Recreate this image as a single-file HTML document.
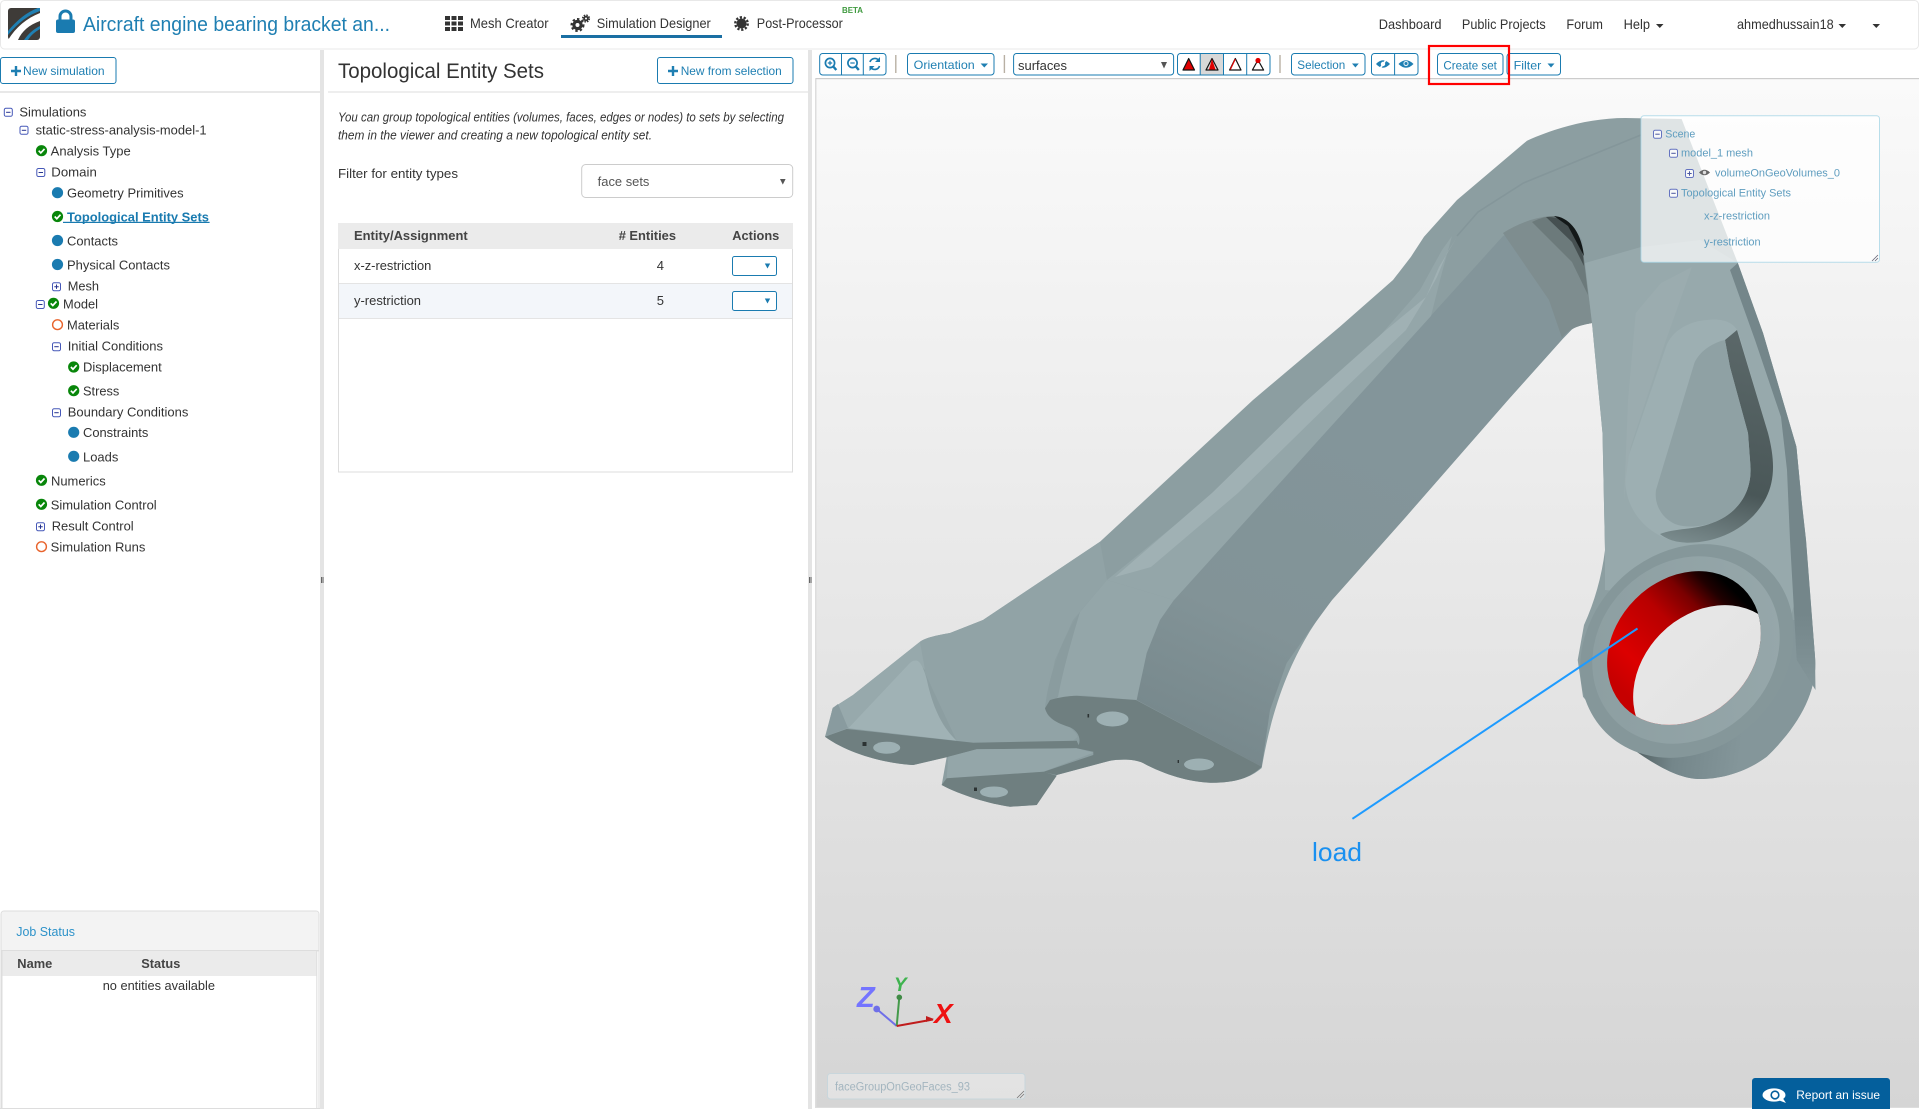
<!DOCTYPE html>
<html lang="en">
<head>
<meta charset="utf-8">
<title>Topological Entity Sets</title>
<style>
html,body{margin:0;padding:0;width:1919px;height:1109px;overflow:hidden;background:#fff}
svg{display:block;position:absolute;left:0;top:0}
text{font-family:"Liberation Sans",sans-serif;white-space:pre}
.tree{font-size:13px;fill:#333}
.nav{font-size:14px;fill:#333}
.blue{fill:#1f7fb2}
.btn{font-size:12px;fill:#1f7fb2}
.scene{font-size:11px;fill:#5f9dbf}
.th{font-size:13px;font-weight:bold;fill:#444}
.td{font-size:13px;fill:#333}
</style>
</head>
<body>
<svg width="1919" height="1109" viewBox="0 0 1919 1109" xmlns="http://www.w3.org/2000/svg">
<defs>
<linearGradient id="bg" gradientUnits="userSpaceOnUse" x1="0" y1="79" x2="0" y2="1107"><stop offset="0" stop-color="#fafafa"/><stop offset="1" stop-color="#d5d5d5"/></linearGradient>
<linearGradient id="face" gradientUnits="userSpaceOnUse" x1="1400" y1="450" x2="1250" y2="780"><stop offset="0" stop-color="#83959a"/><stop offset=".6" stop-color="#829397"/><stop offset="1" stop-color="#76878b"/></linearGradient>
<linearGradient id="redg" gradientUnits="userSpaceOnUse" x1="1610" y1="640" x2="1760" y2="640"><stop offset="0" stop-color="#c60000"/><stop offset=".2" stop-color="#dc0000"/><stop offset=".55" stop-color="#b80000"/><stop offset=".75" stop-color="#7a0000"/><stop offset=".9" stop-color="#200000"/><stop offset="1" stop-color="#000"/></linearGradient>
<linearGradient id="cyl" gradientUnits="userSpaceOnUse" x1="1620" y1="745" x2="1740" y2="760"><stop offset="0" stop-color="#445051"/><stop offset=".45" stop-color="#74868a"/><stop offset="1" stop-color="#84969a"/></linearGradient>
<linearGradient id="ringg" gradientUnits="userSpaceOnUse" x1="1600" y1="570" x2="1780" y2="730"><stop offset="0" stop-color="#8c9ea1"/><stop offset="1" stop-color="#97a8ab"/></linearGradient>
<linearGradient id="wall" gradientUnits="userSpaceOnUse" x1="1740" y1="340" x2="1690" y2="545"><stop offset="0" stop-color="#5a6768"/><stop offset=".7" stop-color="#4a5758"/><stop offset="1" stop-color="#7a8b8d"/></linearGradient>
<linearGradient id="strip" gradientUnits="userSpaceOnUse" x1="0" y1="500" x2="0" y2="690"><stop offset="0" stop-color="#74868a"/><stop offset=".6" stop-color="#74868a"/><stop offset="1" stop-color="#84969a"/></linearGradient>
<clipPath id="holeclip"><ellipse cx="1684" cy="648" rx="84" ry="69" transform="rotate(-45 1684 648)"/></clipPath>
<g id="chk"><circle r="5.6" fill="#08860a"/><path d="M-2.8 0 L-.7 2.2 L3 -1.8" fill="none" stroke="#fff" stroke-width="1.7"/></g>
<circle id="dot" r="5.6" fill="#1a7bb0"/>
<circle id="ring" r="4.9" fill="#fff" stroke="#e8632c" stroke-width="1.4"/>
<g id="min"><rect x="-4" y="-4" width="8" height="8" rx="1.6" fill="#fff" stroke="#4658b8" stroke-width="1"/><path d="M-2.2 0H2.2" stroke="#27348f" stroke-width="1"/></g>
<g id="pls"><rect x="-4" y="-4" width="8" height="8" rx="1.6" fill="#fff" stroke="#4658b8" stroke-width="1"/><path d="M-2.2 0H2.2M0 -2.2V2.2" stroke="#27348f" stroke-width="1"/></g>
</defs>

<!-- header -->
<rect x=".5" y=".5" width="1918" height="48.5" rx="4" fill="#fff" stroke="#e8e8e8"/>
<rect x="8" y="8" width="32" height="32" rx="3" fill="#3e3b38"/>
<path d="M8 40C16 27 27 18 40 13V21C29 25 22 31 18 40Z" fill="#fff"/>
<path d="M8 31C17 20 27 12 38 8H40V11C28 15 18 23 8 35Z" fill="#1f7fb2"/>
<path d="M24 40C29 33 34 29 40 26V29C35 32 31 35 28 40Z" fill="#1f7fb2"/>
<rect x="56" y="19.5" width="19" height="13.5" rx="2" fill="#1a7bb0"/>
<path d="M60 20V16.5A5.5 5.5 0 0 1 71 16.5V20" fill="none" stroke="#1a7bb0" stroke-width="3"/>
<text x="83" y="31" font-size="20" class="blue" textLength="307" lengthAdjust="spacingAndGlyphs">Aircraft engine bearing bracket an...</text>

<g fill="#333">
<rect x="445" y="16" width="5" height="4"/><rect x="451.5" y="16" width="5" height="4"/><rect x="458" y="16" width="5" height="4"/>
<rect x="445" y="21.5" width="5" height="4"/><rect x="451.5" y="21.5" width="5" height="4"/><rect x="458" y="21.5" width="5" height="4"/>
<rect x="445" y="27" width="5" height="4"/><rect x="451.5" y="27" width="5" height="4"/><rect x="458" y="27" width="5" height="4"/>
</g>
<g fill="none" stroke="#333">
<circle cx="577.5" cy="25" r="3.6" stroke-width="3.2"/><circle cx="577.5" cy="25" r="6" stroke-width="2" stroke-dasharray="2.4 2.2"/>
<circle cx="586" cy="18.5" r="1.9" stroke-width="1.8"/><circle cx="586" cy="18.5" r="3.4" stroke-width="1.4" stroke-dasharray="1.6 1.1"/>
<circle cx="741.5" cy="23.5" r="5" fill="#333" stroke="none"/><circle cx="741.5" cy="23.5" r="6.2" stroke-width="2.4" stroke-dasharray="2.2 1.7"/>
</g>
<text x="470" y="28" font-size="14" class="nav" textLength="78.6" lengthAdjust="spacingAndGlyphs">Mesh Creator</text>
<text x="596.8" y="28" font-size="14" class="nav" textLength="114" lengthAdjust="spacingAndGlyphs">Simulation Designer</text>
<text x="756.8" y="28" font-size="14" class="nav" textLength="86" lengthAdjust="spacingAndGlyphs">Post-Processor</text>
<text x="842" y="13" font-size="8.5" font-weight="bold" fill="#3f9a3f" textLength="21" lengthAdjust="spacingAndGlyphs">BETA</text>
<rect x="561" y="35" width="161" height="3" fill="#1a6fa3"/>
<text x="1378.8" y="29" class="nav" textLength="62.7" lengthAdjust="spacingAndGlyphs">Dashboard</text>
<text x="1461.9" y="29" class="nav" textLength="83.8" lengthAdjust="spacingAndGlyphs">Public Projects</text>
<text x="1566.4" y="29" class="nav" textLength="36.6" lengthAdjust="spacingAndGlyphs">Forum</text>
<text x="1623.6" y="29" class="nav" textLength="26.4" lengthAdjust="spacingAndGlyphs">Help</text>
<text x="1737" y="29" class="nav" textLength="96.7" lengthAdjust="spacingAndGlyphs">ahmedhussain18</text>
<path d="M1656 24h7.5l-3.7 4zM1838.5 24h7.5l-3.7 4zM1872.5 24h7.5l-3.7 4z" fill="#333"/>

<!-- splitters -->
<rect x="320" y="50" width="4" height="1059" fill="#e4e4e4"/>
<rect x="808" y="50" width="4" height="1059" fill="#e4e4e4"/>
<path d="M321.5 577v6M323 577v6M809.5 577v6M811 577v6" stroke="#666" stroke-width="1"/>

<!-- left panel -->
<rect x=".5" y="57.5" width="115.5" height="26" rx="2.5" fill="#fff" stroke="#1a7bb0"/>
<path d="M11 71H21M16 66V76" stroke="#1f7fb2" stroke-width="2.4"/>
<text x="23" y="75" class="btn" textLength="81.6" lengthAdjust="spacingAndGlyphs">New simulation</text>
<rect x="0" y="91" width="320" height="2" fill="#e8e8e8"/>

<use href="#min" x="8.3" y="112.3"/><text x="19.4" y="116.3" class="tree" textLength="67" lengthAdjust="spacingAndGlyphs">Simulations</text>
<use href="#min" x="24" y="130.3"/><text x="35.6" y="134.3" class="tree" textLength="171" lengthAdjust="spacingAndGlyphs">static-stress-analysis-model-1</text>
<use href="#chk" x="41.5" y="150.7"/><text x="50.7" y="155.3" class="tree" textLength="80" lengthAdjust="spacingAndGlyphs">Analysis Type</text>
<use href="#min" x="40.8" y="172.5"/><text x="51.3" y="176.3" class="tree" textLength="45.5" lengthAdjust="spacingAndGlyphs">Domain</text>
<use href="#dot" x="57.5" y="192.7"/><text x="67" y="197.3" class="tree" textLength="116.6" lengthAdjust="spacingAndGlyphs">Geometry Primitives</text>
<use href="#chk" x="57.5" y="216.5"/><text x="67" y="221.3" font-size="13" font-weight="bold" fill="#1a7bb0" textLength="142" lengthAdjust="spacingAndGlyphs">Topological Entity Sets</text>
<rect x="63" y="221.8" width="146.6" height="1.2" fill="#1a7bb0"/>
<use href="#dot" x="57.5" y="240.5"/><text x="67" y="245.3" class="tree" textLength="51" lengthAdjust="spacingAndGlyphs">Contacts</text>
<use href="#dot" x="57.5" y="264.5"/><text x="67" y="269.3" class="tree" textLength="103" lengthAdjust="spacingAndGlyphs">Physical Contacts</text>
<use href="#pls" x="56.5" y="286.7"/><text x="67.7" y="290.3" class="tree" textLength="31.3" lengthAdjust="spacingAndGlyphs">Mesh</text>
<use href="#min" x="40.3" y="304.5"/><use href="#chk" x="53.5" y="303.3"/><text x="63" y="308.3" class="tree" textLength="35" lengthAdjust="spacingAndGlyphs">Model</text>
<use href="#ring" x="57.5" y="324.7"/><text x="67" y="329.3" class="tree" textLength="52.3" lengthAdjust="spacingAndGlyphs">Materials</text>
<use href="#min" x="56.5" y="346.7"/><text x="67.7" y="350.3" class="tree" textLength="95.3" lengthAdjust="spacingAndGlyphs">Initial Conditions</text>
<use href="#chk" x="73.7" y="367"/><text x="83" y="371.3" class="tree" textLength="78.7" lengthAdjust="spacingAndGlyphs">Displacement</text>
<use href="#chk" x="73.7" y="390.7"/><text x="83" y="395.3" class="tree" textLength="36.3" lengthAdjust="spacingAndGlyphs">Stress</text>
<use href="#min" x="56.5" y="412.7"/><text x="67.7" y="416.3" class="tree" textLength="120.7" lengthAdjust="spacingAndGlyphs">Boundary Conditions</text>
<use href="#dot" x="73.7" y="432.3"/><text x="83" y="437" class="tree" textLength="65.3" lengthAdjust="spacingAndGlyphs">Constraints</text>
<use href="#dot" x="73.7" y="456.3"/><text x="83" y="461.3" class="tree" textLength="35.3" lengthAdjust="spacingAndGlyphs">Loads</text>
<use href="#chk" x="41.5" y="480.3"/><text x="51" y="485.3" class="tree" textLength="54.7" lengthAdjust="spacingAndGlyphs">Numerics</text>
<use href="#chk" x="41.5" y="504.3"/><text x="50.7" y="509.3" class="tree" textLength="106" lengthAdjust="spacingAndGlyphs">Simulation Control</text>
<use href="#pls" x="40.5" y="526.7"/><text x="51.7" y="530.3" class="tree" textLength="82" lengthAdjust="spacingAndGlyphs">Result Control</text>
<use href="#ring" x="41.5" y="546.7"/><text x="50.7" y="551.3" class="tree" textLength="94.7" lengthAdjust="spacingAndGlyphs">Simulation Runs</text>

<!-- job status -->
<path d="M1 1109V914a3 3 0 0 1 3-3H316a3 3 0 0 1 3 3V1109Z" fill="#fff" stroke="#ddd"/>
<path d="M1.5 951V914a2.5 2.5 0 0 1 2.5-2.5H316a2.5 2.5 0 0 1 2.5 2.5V951Z" fill="#f3f3f3"/>
<rect x="1" y="950" width="318" height="1.4" fill="#ddd"/>
<text x="16.3" y="936" font-size="13" fill="#2d92c9" textLength="58.7" lengthAdjust="spacingAndGlyphs">Job Status</text>
<rect x="2" y="951" width="315" height="25" fill="#ebebeb"/>
<path d="M2 951V1109M316.8 951V1109" stroke="#ddd"/>
<rect x="0" y="1108" width="320" height="1" fill="#ddd"/>
<text x="17.3" y="968" class="th" textLength="35" lengthAdjust="spacingAndGlyphs">Name</text>
<text x="141.3" y="968" class="th" textLength="39" lengthAdjust="spacingAndGlyphs">Status</text>
<text x="102.7" y="990" font-size="13" fill="#333" textLength="112.3" lengthAdjust="spacingAndGlyphs">no entities available</text>

<!-- middle panel -->
<rect x="328" y="91" width="480" height="2" fill="#eee"/>
<text x="338" y="78" font-size="21" fill="#333" textLength="206" lengthAdjust="spacingAndGlyphs">Topological Entity Sets</text>
<rect x="657.5" y="57.5" width="135.5" height="26" rx="2.5" fill="#fff" stroke="#1a7bb0"/>
<path d="M668 71H678M673 66V76" stroke="#1f7fb2" stroke-width="2.4"/>
<text x="680.7" y="75" class="btn" textLength="101" lengthAdjust="spacingAndGlyphs">New from selection</text>
<text x="338" y="121.5" font-size="12.5" font-style="italic" fill="#333" textLength="446" lengthAdjust="spacingAndGlyphs">You can group topological entities (volumes, faces, edges or nodes) to sets by selecting</text>
<text x="338" y="139.5" font-size="12.5" font-style="italic" fill="#333" textLength="314" lengthAdjust="spacingAndGlyphs">them in the viewer and creating a new topological entity set.</text>
<text x="338" y="178" font-size="13" fill="#333" textLength="120" lengthAdjust="spacingAndGlyphs">Filter for entity types</text>
<rect x="581.7" y="164.5" width="211" height="33" rx="4" fill="#fff" stroke="#ccc"/>
<text x="597.7" y="186" font-size="12.5" fill="#555" textLength="51.7" lengthAdjust="spacingAndGlyphs">face sets</text>
<path d="M780 179h5.6l-2.8 5.6z" fill="#555"/>

<rect x="338.5" y="223.5" width="454" height="248.5" fill="#fff" stroke="#ddd"/>
<rect x="338" y="223" width="455" height="26" fill="#ebebeb"/>
<text x="354" y="240" class="th" textLength="113.7" lengthAdjust="spacingAndGlyphs">Entity/Assignment</text>
<text x="618.7" y="240" class="th" textLength="57.3" lengthAdjust="spacingAndGlyphs"># Entities</text>
<text x="732.3" y="240" class="th" textLength="47" lengthAdjust="spacingAndGlyphs">Actions</text>
<rect x="339" y="283" width="453" height="35" fill="#f3f6fa"/>
<path d="M339 283.5H792M339 318.5H792" stroke="#e4e4e4"/>
<text x="354" y="270" class="td" textLength="77.3" lengthAdjust="spacingAndGlyphs">x-z-restriction</text>
<text x="656.7" y="270" class="td">4</text>
<text x="354" y="305" class="td" textLength="67" lengthAdjust="spacingAndGlyphs">y-restriction</text>
<text x="656.7" y="305" class="td">5</text>
<rect x="732.5" y="256.5" width="44" height="19" rx="2" fill="#fff" stroke="#1a7bb0"/>
<rect x="732.5" y="291.5" width="44" height="19" rx="2" fill="#fff" stroke="#1a7bb0"/>
<path d="M764.8 263.5h5.4l-2.7 5zM764.8 298.5h5.4l-2.7 5z" fill="#1a7bb0"/>

<!-- viewer -->
<rect x="815" y="78" width="1104" height="1030" fill="#ddd"/>
<rect x="816.5" y="79" width="1102.5" height="1028" fill="url(#bg)"/>
<rect x="816" y="78" width="1103" height="1.2" fill="#ccc"/>

<!-- model: silhouette -->
<path fill="#8c9ea1" d="M1527,140.7 C1555,128 1590,118 1625.5,118 L1681.6,119 L1737.8,263 L1763,333 L1796.4,446.7 L1801.5,500 L1806,540 L1815,656.7 C1818,690 1800,725 1766.7,756.7 C1745,773 1720,779 1700,779 C1680,779 1655,767 1616.7,736.7 L1583,696.7 L1577.7,660 L1584,625 Q1600,590 1605,550 L1602.5,433 L1592,323 C1575,326 1568,330 1561.7,340 L1508,400 L1406,516.7 L1332,600 C1300,640 1275,690 1261.7,768 C1250,778 1235,783 1210,782.7 C1190,782 1165,775 1143,763 C1135,759 1120,759 1110,760.7 L1056.7,775 L1036.7,805 L1010,806.7 C990,804 960,795 941.7,785 L946.7,757 L913.3,765 C890,764 850,755 825,736.7 L832.7,708 L853,695 L920,641.7 Q926,637 950,633 L983,620 L1100,541.7 L1253,400 L1339.8,326.7 L1393,280 L1411,256.7 L1424,236.7 L1457,200Z"/>
<!-- left lower arm -->
<path fill="#91a3a6" d="M983,620 L1100,541.7 L1107,580 L1073,620 L1055,660 L1045,708 C1050,720 1072,724 1077.7,736.7 L1073,740.7 L973,742.7 L956.7,740.7 L925,673 L920,641.7 Q926,637 950,633Z"/>
<polygon fill="#97a9ac" points="832.7,708 853,695 920,641.7 925,670 915,660 848.3,728.3 826,736"/>
<polygon fill="#899b9f" points="832.7,708 838,704 848,728 826,736"/>
<path fill="#a0b2b5" d="M848.3,728.3 L908,665 Q915,657 920,663 Q925,670 928,685 C934,710 943,728 956.7,740.7Z"/>
<!-- arch -->
<path fill="#94a6a9" d="M1045,708 C1048,680 1060,640 1080,612 L1107,580 L1174,600 L1160,620 C1150,645 1142,670 1136.7,700 C1110,698 1090,695 1076.7,695.7 C1065,696 1052,698 1045,708Z"/>
<path fill="#8a9c9f" d="M1045,708 C1048,680 1060,640 1080,612 C1070,645 1062,675 1058,697Z"/>
<!-- dark face -->
<polygon fill="url(#face)" points="1503,236 1530,220 1554,216 1569,222 1582,240 1585,267 1592,323 1574.5,326.7 1561.7,340 1508,400 1406,516.7 1332,600 1310,630 1286.7,663 1270,710 1261.7,766.7 1136.7,700 1146.7,653 1160,620 1174,600"/>
<!-- bands -->
<polygon fill="#94a6a9" points="1107,580 1289,433 1385,330 1420,290 1442,250 1452,236 1440,280 1431,316 1325,433 1174,600"/>
<polygon fill="#a0b1b4" points="1115,577 1212,493 1304,403 1386,330 1426,297 1406,330 1340,393 1238,493 1151,567"/>
<polygon fill="#a0b1b4" points="1426,297 1439,267 1457,237 1447,253 1437,277"/>
<path d="M1640.8,135 L1523.5,183 L1478,212 L1457,236" fill="none" stroke="#84969a" stroke-width="1.6"/>
<!-- arm pocket -->
<path fill="#7e8d8f" d="M1503,233 C1520,222 1540,216 1554,216 C1572,218 1582,235 1584,260 L1592,323 C1575,326 1568,330 1562,338 L1549,300Z"/>
<path fill="#6c7a7b" d="M1532,222 C1540,218 1548,216 1554,216 C1572,218 1582,235 1584,260 L1588,295 L1572,262Z"/>
<path fill="#465051" d="M1546,217 C1570,216 1582,235 1584,266 L1572,242Z"/>
<path fill="#131818" d="M1554,216 C1568,217 1581,230 1584,256 L1568,226Z"/>
<!-- leg -->
<polygon fill="#97a9ac" points="1585,263 1641,247 1700,240 1737.8,263 1763,333 1796.4,446.7 1801.5,500 1806,560 1790,620 1696,600 1605,590 1605,550 1602.5,433 1592,323"/>
<polygon fill="#9bacaf" points="1635.7,313 1661,283 1692,267 1666,340 1630.6,446.7 1624,500 1628,400"/>
<!-- lower cylinder -->
<path fill="url(#cyl)" d="M1790,620 L1812,620 L1815,656.7 C1818,690 1800,725 1766.7,756.7 C1745,773 1720,779 1700,779 C1680,779 1655,767 1616.7,736.7 L1700,650Z"/>
<polygon fill="url(#strip)" points="1737.8,263 1763,333 1796.4,446.7 1801.5,500 1806,540 1815,656.7 1815.5,690 1796.7,660 1790,540 1787,470 1781,417 1755,340 1730,270"/>
<!-- teardrop -->
<path fill="#9dafb2" d="M1707,320 C1722,318 1735,322 1739,334 L1768,433 C1775,460 1775,480 1766,498 C1752,525 1722,543 1686.7,542.7 C1655,542 1625,515 1625.5,480 L1629,455 L1666,346.7 C1672,330 1690,321 1707,320Z"/>
<path fill="url(#wall)" d="M1725,340 L1737,330 L1768,433 C1775,460 1775,480 1766,498 C1752,525 1722,543 1686.7,542.7 C1675,542 1668,540 1660,534 C1675,528 1695,530 1712,523 C1735,515 1752,495 1750.5,466.7 L1748,433 L1730,367Z"/>
<path fill="#8fa1a4" d="M1725,340 L1730,367 L1748,433 L1750.5,466.7 C1752,495 1735,515 1712,523 C1700,527 1685,528 1675,524 C1662,518 1654,505 1656,490 L1694.4,363 C1700,350 1715,342 1725,340Z"/>
<!-- ring -->
<ellipse cx="1687" cy="651" rx="115" ry="98" transform="rotate(-45 1687 651)" fill="#85979a"/>
<ellipse cx="1686" cy="650" rx="100" ry="87" transform="rotate(-45 1686 650)" fill="url(#ringg)"/>
<ellipse cx="1684" cy="648" rx="84" ry="69" transform="rotate(-45 1684 648)" fill="url(#redg)"/>
<g clip-path="url(#holeclip)"><ellipse cx="1710" cy="682" rx="84" ry="69" transform="rotate(-45 1710 682)" fill="url(#bg)"/></g>
<!-- feet -->
<path fill="#6f7f80" d="M825,736.7 L846.7,729 L973.3,742.7 L1076.7,740.7 L1080,748.3 L976.7,749.3 L946.7,757.3 L913.3,765 C890,764 850,755 825,736.7Z"/>
<path fill="#6f7f80" d="M1045,708.3 L1050,700 C1060,697 1068,696 1076.7,695.7 L1136,700 L1261.7,766.7 C1250,778 1235,783 1210,782.7 C1190,782 1165,775 1143,763 C1135,759 1120,759 1110,760.7 L1056.7,775 L1043,772 L1093.3,755 L1093.3,751.7 L1076.7,748.3 C1082,742 1080,732 1070,727.3 C1060,724 1048,720 1045,708.3Z"/>
<path fill="#94a6a9" d="M948.3,756.7 L976.7,749.3 L1076.7,748.3 L1093.3,752.7 L1043.3,771.7 L946.7,778.3Z"/>
<path fill="#6f7f80" d="M941.7,785 L946.7,778.3 L1043.3,771.7 L1056.7,775.7 L1036.7,805 L1010,806.7 C990,804 960,795 941.7,785Z"/>
<g fill="#9db0b3"><ellipse cx="886.7" cy="747.7" rx="13.5" ry="6"/><ellipse cx="1112.5" cy="719" rx="16" ry="7.5"/><ellipse cx="1199" cy="764.5" rx="15" ry="6"/><ellipse cx="994" cy="792" rx="14" ry="5.5"/></g>
<g fill="#2c3333"><rect x="862.5" y="742" width="4" height="4"/><rect x="1087.5" y="714" width="1.6" height="3.5"/><rect x="1177.6" y="760" width="1.4" height="3"/><rect x="974" y="787.5" width="3" height="3.5"/></g>
<!-- annotation -->
<path d="M1352.4 818.8L1637.5 628.5" stroke="#1e9bff" stroke-width="2" fill="none"/>
<text x="1312" y="861" font-size="26" fill="#1a90f0" textLength="50" lengthAdjust="spacingAndGlyphs">load</text>

<!-- axes -->
<g fill="none" stroke-width="2">
<path d="M896.7 1026L876.7 1009" stroke="#6f6fe8"/><path d="M896.7 1026L899.3 997.3" stroke="#449a4a"/><path d="M896.7 1026L933 1019.5" stroke="#c01c1c"/>
</g>
<circle cx="876.7" cy="1009" r="3.4" fill="#6f6fe8"/><circle cx="899.3" cy="997.3" r="2.8" fill="#3f8a45"/><path d="M934 1019L926 1016V1022Z" fill="#c01c1c"/>
<text x="857" y="1007" font-size="29" font-weight="bold" font-style="italic" fill="#7474ff">Z</text>
<text x="894" y="991" font-size="19" font-weight="bold" font-style="italic" fill="#3fb34f">Y</text>
<text x="934" y="1023" font-size="28" font-weight="bold" font-style="italic" fill="#ee1111">X</text>

<!-- scene panel -->
<rect x="1641" y="115.7" width="238.5" height="146.6" rx="3" fill="#fff" fill-opacity=".72" stroke="#a8d6e6" stroke-opacity=".8"/>
<path d="M1872 261L1878 255M1875 261L1878 258" stroke="#667" stroke-width=".8"/>
<g opacity=".8">
<use href="#min" x="1657.5" y="134.2"/><use href="#min" x="1673.5" y="153.3"/><use href="#pls" x="1689.5" y="173.5"/><use href="#min" x="1673.5" y="193.3"/>
</g>
<path d="M1699 172.5Q1704.5 167 1710 172.5Q1704.5 178 1699 172.5Z" fill="#666"/><circle cx="1704.5" cy="172.5" r="1.7" fill="#ddd"/>
<text x="1665.3" y="137.5" class="scene" fill="#5d8aa3" textLength="30" lengthAdjust="spacingAndGlyphs">Scene</text>
<text x="1681" y="156.5" class="scene" textLength="72" lengthAdjust="spacingAndGlyphs">model_1 mesh</text>
<text x="1715" y="176.5" class="scene" textLength="125" lengthAdjust="spacingAndGlyphs">volumeOnGeoVolumes_0</text>
<text x="1681" y="196.5" class="scene" textLength="110" lengthAdjust="spacingAndGlyphs">Topological Entity Sets</text>
<text x="1704" y="219.5" class="scene" textLength="66" lengthAdjust="spacingAndGlyphs">x-z-restriction</text>
<text x="1704" y="245.5" class="scene" textLength="56.6" lengthAdjust="spacingAndGlyphs">y-restriction</text>

<!-- bottom input -->
<rect x="827.5" y="1073.5" width="197.5" height="25.5" rx="3" fill="#eaeaea" fill-opacity=".65" stroke="#c8d6dc"/>
<text x="835" y="1090.5" font-size="11.5" fill="#a3b5bf" textLength="135" lengthAdjust="spacingAndGlyphs">faceGroupOnGeoFaces_93</text>
<path d="M1017 1098L1024 1091M1020 1098L1024 1094" stroke="#777" stroke-width=".8"/>

<!-- report -->
<path d="M1752 1109V1081a3 3 0 0 1 3-3H1887a3 3 0 0 1 3 3V1109Z" fill="#045f9c"/>
<ellipse cx="1774" cy="1095" rx="11.5" ry="6.6" fill="#fff"/><path d="M1778 1100L1786 1103L1782 1097Z" fill="#fff"/>
<circle cx="1775" cy="1095" r="3.8" fill="#fff" stroke="#045f9c" stroke-width="1.6"/>
<text x="1796.3" y="1099" font-size="12" fill="#fff" textLength="83.7" lengthAdjust="spacingAndGlyphs">Report an issue</text>

<!-- toolbar -->
<g fill="#fff" stroke="#1a7bb0">
<rect x="819.7" y="53.5" width="66.3" height="21.5" rx="3"/>
<rect x="907.5" y="53.5" width="86.5" height="21.5" rx="3"/>
<rect x="1013.6" y="53.5" width="160" height="21.5" rx="3"/>
<rect x="1177.5" y="53.5" width="92.5" height="21.5" rx="3"/>
<rect x="1291.5" y="53.5" width="73.5" height="21.5" rx="3"/>
<rect x="1371.5" y="53.5" width="46.5" height="21.5" rx="3"/>
<rect x="1437.5" y="53.5" width="65.5" height="21.5" rx="3"/>
<rect x="1507" y="53.5" width="53.5" height="21.5" rx="3"/>
</g>
<rect x="1200.5" y="54" width="23" height="20.5" fill="#d8d8d8"/>
<path d="M841.5 53.5V75M863.3 53.5V75M1200.2 53.5V75M1223.5 53.5V75M1246.7 53.5V75M1394.6 53.5V75" stroke="#1a7bb0"/>
<path d="M895.8 55V73M1004.4 55V73M1280 55V73" stroke="#b8b0a4" stroke-width="1.4"/>
<g fill="none" stroke="#1a7bb0" stroke-width="1.7">
<circle cx="830" cy="63" r="4.6"/><path d="M833.3 66.5L836.3 70" stroke-width="2.4"/><path d="M827.8 63H832.2M830 60.8V65.2" stroke-width="1.2"/>
<circle cx="852.5" cy="63" r="4.6"/><path d="M855.8 66.5L858.8 70" stroke-width="2.4"/><path d="M850.3 63H854.7" stroke-width="1.2"/>
<path d="M870 62A5 5 0 0 1 878.8 60.5M879.5 66A5 5 0 0 1 870.8 67.5"/>
</g>
<path d="M880 57V62H875ZM869.5 71V66H874.5Z" fill="#1a7bb0"/>
<text x="913.7" y="69" class="btn" textLength="61" lengthAdjust="spacingAndGlyphs">Orientation</text>
<path d="M980.6 63.5h7.4l-3.7 4zM1352 63.5h6.8l-3.4 4zM1547.5 63.5h7l-3.5 4z" fill="#1f7fb2"/>
<text x="1018" y="70" font-size="13" fill="#333" textLength="49" lengthAdjust="spacingAndGlyphs">surfaces</text>
<path d="M1161 62h6l-3 6.5z" fill="#555"/>
<text x="1297.3" y="69" class="btn" textLength="48" lengthAdjust="spacingAndGlyphs">Selection</text>
<text x="1443.4" y="69.5" class="btn" textLength="53.5" lengthAdjust="spacingAndGlyphs">Create set</text>
<text x="1513.6" y="69.5" class="btn" textLength="27.7" lengthAdjust="spacingAndGlyphs">Filter</text>
<!-- triangle icons -->
<g stroke="#111" stroke-width="1.2" stroke-linejoin="round">
<path d="M1188.7 58.5L1194.5 70H1183Z" fill="#e00000"/>
<path d="M1212 58.5L1218 70H1206Z" fill="#d8d8d8"/><path d="M1212 59L1215.5 69.5H1209Z" fill="#e00000" stroke="none"/>
<path d="M1235.3 58.5L1241 70H1229.6Z" fill="#fff"/><path d="M1235.3 59L1230.3 69.5" stroke="#e00000" fill="none"/>
<path d="M1258 60L1263.6 70H1252.4Z" fill="#fff"/>
</g>
<circle cx="1258" cy="60.5" r="2.6" fill="#e00000"/>
<!-- eyes -->
<path d="M1376 64Q1383 56.5 1390 64Q1383 71.5 1376 64Z" fill="#1f7fb2"/><circle cx="1383" cy="64" r="2.2" fill="#fff"/><path d="M1379 70L1388 57" stroke="#fff" stroke-width="1.6"/>
<path d="M1398.5 64Q1406 56.5 1413.5 64Q1406 71.5 1398.5 64Z" fill="#1f7fb2"/><circle cx="1406" cy="63.5" r="2.6" fill="#fff" fill-opacity=".85"/><circle cx="1406" cy="63.5" r="1.5" fill="#1f7fb2"/>
<!-- red highlight -->
<rect x="1429" y="46" width="80" height="38" fill="none" stroke="#f00" stroke-width="2.2"/>
</svg>
</body>
</html>
